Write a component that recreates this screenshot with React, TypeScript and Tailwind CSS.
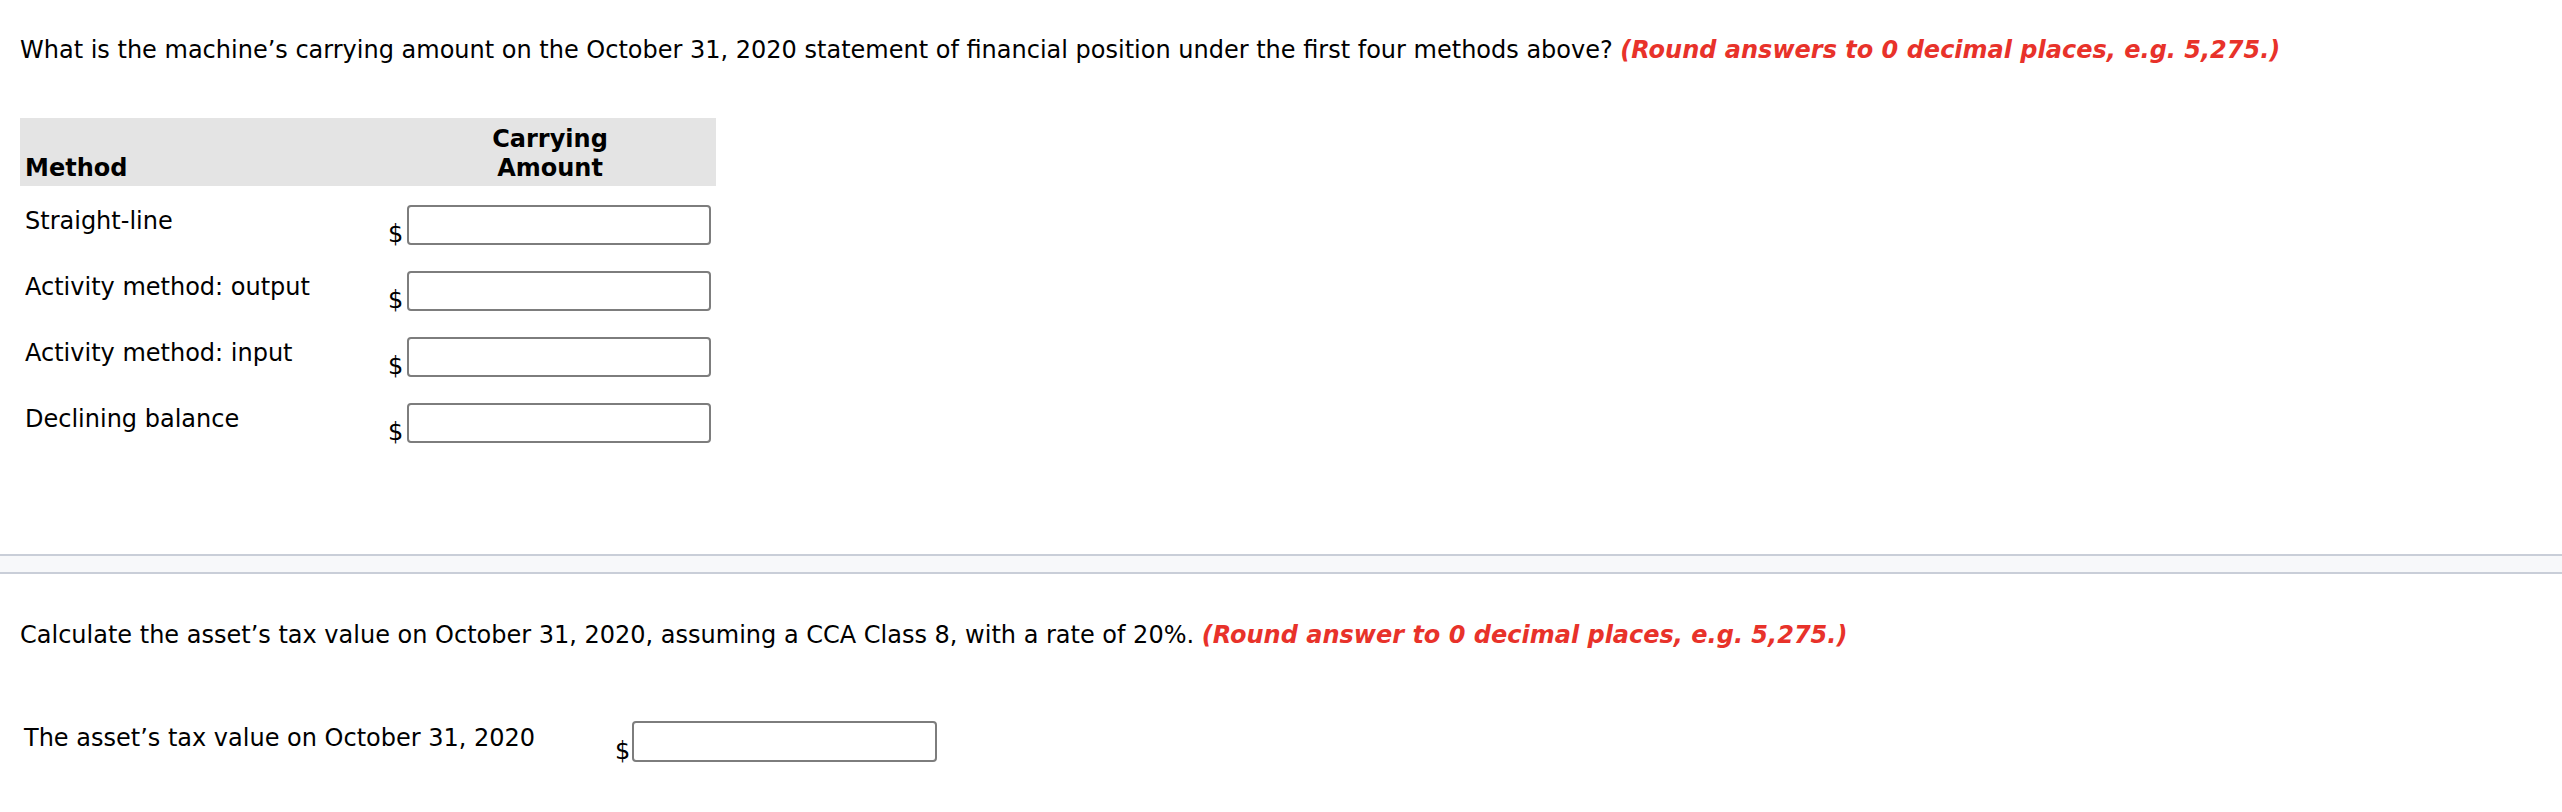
const methods = [
  "Straight-line",
  "Activity method: output",
  "Activity method: input",
  "Declining balance",
];

function MoneyInput() {
  return (
    <div className="flex items-end">
      <span className="leading-[22px] w-[15px] mr-[4px]">$</span>
      <input
        type="text"
        className="w-[304px] h-[40px] border-2 border-[#7d7d7d] rounded-[4px] bg-white px-2 outline-none"
      />
    </div>
  );
}

export default function App() {
  return (
    <div className="min-h-screen bg-white text-black text-[24px] font-['DejaVu_Sans',Verdana,sans-serif]">
      <div className="px-5 pt-[36px]">
        <p className="leading-[28px]">
          What is the machine’s carrying amount on the October 31, 2020 statement of financial position under the first four methods above?{" "}
          <span className="font-bold italic text-[#e8322a]">(Round answers to 0 decimal places, e.g. 5,275.)</span>
        </p>

        <table className="mt-[54px] border-collapse">
          <thead>
            <tr className="bg-[#e4e4e4]">
              <th className="w-[364px] h-[68px] align-bottom text-left font-bold leading-[29px] pl-[5px] pb-[3px]">
                Method
              </th>
              <th className="w-[332px] h-[68px] align-bottom text-center font-bold leading-[29px] pb-[3px]">
                Carrying
                <br />
                Amount
              </th>
            </tr>
          </thead>
          <tbody>
            {methods.map((m) => (
              <tr key={m}>
                <td className="align-top pl-[5px] pt-[22px] pb-[7px] leading-[26px]">{m}</td>
                <td className="align-top pt-[19px] pb-[7px] pl-[4px]">
                  <MoneyInput />
                </td>
              </tr>
            ))}
          </tbody>
        </table>
      </div>

      <div className="mt-[104px] h-[20px] border-y-2 border-[#c9ced8] bg-[#f7f8fa]" />

      <div className="px-5 pt-[47px]">
        <p className="leading-[28px]">
          Calculate the asset’s tax value on October 31, 2020, assuming a CCA Class 8, with a rate of 20%.{" "}
          <span className="font-bold italic text-[#e8322a]">(Round answer to 0 decimal places, e.g. 5,275.)</span>
        </p>

        <div className="mt-[72px] flex items-start">
          <div className="w-[595px] pl-[4px] pt-[4px] leading-[26px]">The asset’s tax value on October 31, 2020</div>
          <div className="flex items-end">
            <span className="leading-[22px] w-[15px] mr-[2px]">$</span>
            <input
              type="text"
              className="w-[305px] h-[41px] border-2 border-[#7d7d7d] rounded-[4px] bg-white px-2 outline-none"
            />
          </div>
        </div>
      </div>
    </div>
  );
}
